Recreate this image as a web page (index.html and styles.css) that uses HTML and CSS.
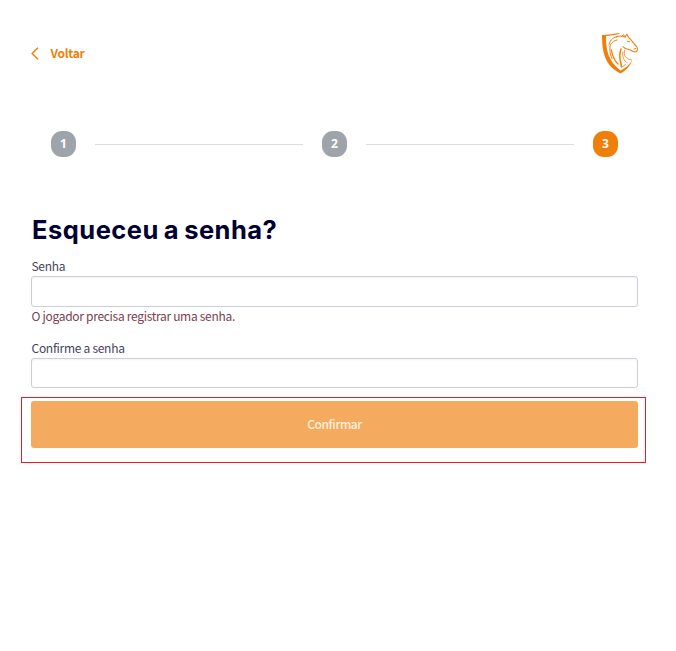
FILE: index.html
```html
<!DOCTYPE html>
<html lang="pt-BR">
<head>
<meta charset="utf-8">
<title>Esqueceu a senha?</title>
<link rel="stylesheet" href="styles.css">
</head>
<body>
<main class="page">
  <header class="top">
    <a class="back">
      <svg width="8" height="13" viewBox="0 0 8 13" fill="none" stroke="currentColor" stroke-width="1.4"><path d="M7 .8 1.1 6.5 7 12.2"/></svg>
      <span class="back-text">Voltar</span>
    </a>
    <svg class="logo" width="37" height="42" viewBox="0 0 37 42" fill="none" stroke="#f07f09" stroke-linecap="round" stroke-linejoin="round">
      <path fill="#f07f09" stroke="none" d="M0 2C6 1.800 12 .8 18 0L16.500 1.200C12 2 8.500 2.700 4 3C4 17 6 28 18.500 37.500C23 35.500 27 32 30.500 27C28 33 24 37.500 18.500 40.500C3 32.500 0 20 0 2Z"/>
      <path stroke-width="1.100" d="M14.500 3.800C17 2.800 20 2.800 23 4L25 1.200 26.500 4.500C29.500 6.500 30.500 9.500 34.500 13.500C36 15.500 35.800 18 33.500 19C31.500 19.300 29.500 17 26 16.300C23.500 16 22 15 21 13.500"/>
      <path stroke-width="1" d="M19.500 3.500 21.500 1.500 23 4M14.500 3.800C10 5 7.500 8 7 12M15 7C9 8.500 7.500 12 8 18C8 20.500 9 23 10 25.500M25.500 8.200 27.500 8.800M32 16 33.500 15.500"/>
      <path stroke-width="1.300" d="M9.500 17C10 22 12 27 16 31"/>
      <path stroke-width="1.500" d="M19 16C18 20 17 22 18 26C18.500 29 19.500 32 19.300 34"/>
      <path stroke-width=".8" d="M22.500 17.500C21.500 22 23 26 29.500 27M20.800 19C20 24 22 28 25 29.500M23.500 31.500C22.500 32.500 21.500 33 20.500 33.500"/>
    </svg>
  </header>
  <div class="steps">
    <span class="step">1</span><i class="line"></i><span class="step">2</span><i class="line"></i><span class="step current">3</span>
  </div>
  <h1>Esqueceu a senha?</h1>
  <form>
    <label for="senha">Senha</label>
    <input id="senha" class="first" type="password">
    <p class="error">O jogador precisa registrar uma senha.</p>
    <label for="confirme">Confirme a senha</label>
    <input id="confirme" type="password">
    <div class="highlight"><button type="button">Confirmar</button></div>
  </form>
</main>
</body>
</html>
```
FILE: styles.css
```css
* { box-sizing: border-box; }
body {
  margin: 0;
  background: #fff;
  font-family: "Noto Sans CJK JP", "Noto Sans", sans-serif;
  font-size: 12px;
  letter-spacing: -0.28px;
  color: #444460;
}
.page { padding: 33px 38px 0 31px; }
.top {
  height: 42px;
  display: flex;
  justify-content: space-between;
}
.back {
  display: flex;
  align-items: center;
  gap: 11.5px;
  height: 40px;
  color: #ef7f0a;
  font-weight: 700;
  letter-spacing: -0.25px;
}
.back-text { padding-bottom: 2px; }
.logo { margin-right: -1px; }
.steps {
  margin-top: 56px;
  padding: 0 20px;
  height: 26px;
  display: flex;
  align-items: center;
  gap: 19px;
}
.step {
  width: 25px;
  height: 26px;
  border-radius: 11px;
  background: #9fa4aa;
  color: #fff;
  font: 700 12px/26px "Open Sans", sans-serif;
  letter-spacing: 0;
  text-align: center;
}
.current { background: #f07f09; }
.line { flex: 1; height: 1px; margin-top: 1px; background: #dedede; }
h1 {
  margin: 57px 0 0 1px;
  height: 32px;
  font: 700 25.5px/32px Inter, sans-serif;
  letter-spacing: 0.48px;
  word-spacing: -1.5px;
  white-space: nowrap;
  color: #000033;
}
form { display: flex; flex-direction: column; margin-top: 12px; }
label { height: 18px; line-height: 16px; padding-left: .5px; }
input {
  width: 100%;
  height: 30px;
  border: 1px solid #cdcfd8;
  border-radius: 3px;
  box-shadow: inset 0 1px 2px #0000000d;
  background: #fff;
}
.first { height: 31px; }
.error { margin: 0 0 15px; padding-left: .5px; height: 18px; line-height: 18px; letter-spacing: -0.3px; color: #7a4050; }
.highlight {
  margin: 9px -8px 0 -10px;
  height: 66px;
  padding: 3px 7px 0 9px;
  border: 1px solid #ed1c24;
}
button {
  display: block;
  width: 100%;
  height: 47px;
  padding: 0 0 2px;
  border: 0;
  border-radius: 3px;
  background: #f5ab5f;
  color: #fff0df;
  font: 500 12px/45px "Noto Sans CJK JP", "Noto Sans", sans-serif;
  letter-spacing: -0.4px;
}
```
